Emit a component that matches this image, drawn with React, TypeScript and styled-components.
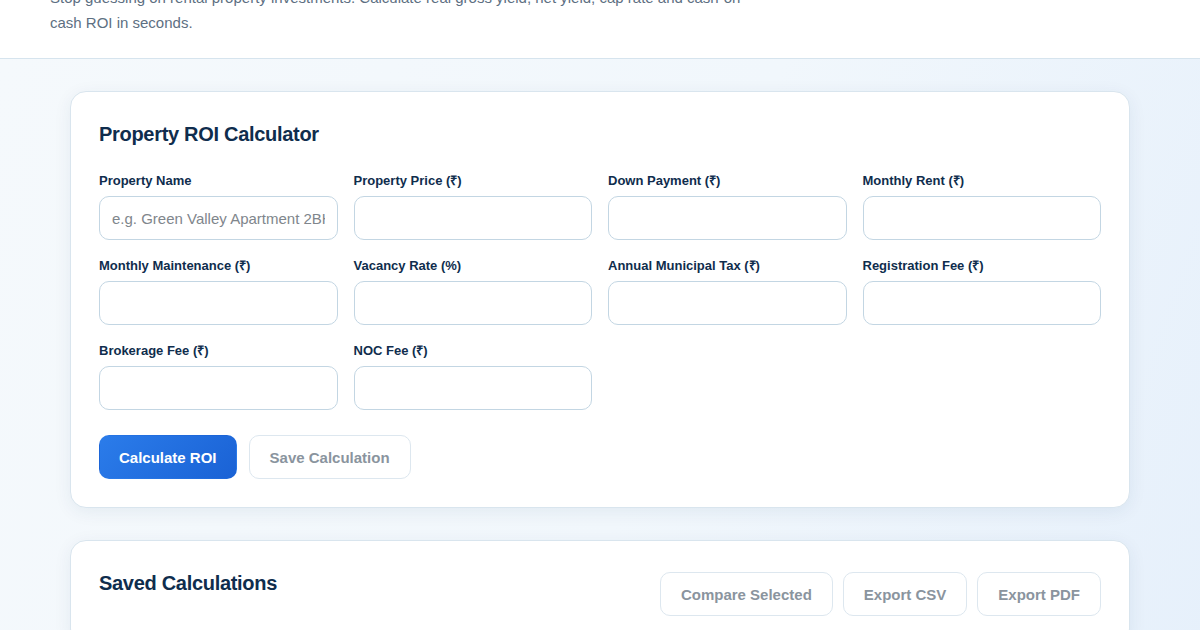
import React from 'react';
import styled, { createGlobalStyle } from 'styled-components';

const GlobalStyle = createGlobalStyle`
  * { box-sizing: border-box; }
  html, body {
    margin: 0;
    padding: 0;
    font-family: "Liberation Sans", Arial, sans-serif;
    background: #f4f8fb;
  }
`;

const Header = styled.header`
  background: #ffffff;
  border-bottom: 1px solid #d6e4ee;
  padding: 0 50px 23px;
`;

const Description = styled.p`
  margin: -15px 0 0;
  max-width: 720px;
  font-size: 15px;
  line-height: 25px;
  color: #5d6f82;
`;

const Main = styled.main`
  min-height: 600px;
  padding: 32px 70px;
  display: flex;
  flex-direction: column;
  gap: 32px;
  background: linear-gradient(110deg, #f5f9fc 0%, #f1f7fc 55%, #e6f0fb 100%);
`;

const Card = styled.section`
  background: #ffffff;
  border: 1px solid #d9e5ee;
  border-radius: 16px;
  padding: 28px;
  box-shadow: 0 4px 18px rgba(20, 60, 100, 0.07);
`;

const CardTitle = styled.h2`
  margin: 0;
  font-size: 20px;
  line-height: 28px;
  font-weight: 700;
  color: #0f2d4d;
  letter-spacing: -0.3px;
`;

const FormGrid = styled.div`
  margin-top: 25px;
  display: grid;
  grid-template-columns: repeat(4, 1fr);
  column-gap: 16px;
  row-gap: 18px;
`;

const Field = styled.label`
  display: flex;
  flex-direction: column;
  gap: 7px;
`;

const LabelText = styled.span`
  font-size: 13px;
  line-height: 16px;
  font-weight: 700;
  color: #0f2d4d;
`;

const Input = styled.input`
  height: 44px;
  width: 100%;
  border: 1px solid #c3d6e3;
  border-radius: 10px;
  padding: 0 12px;
  font-family: inherit;
  font-size: 15px;
  color: #1f2f40;
  background: #ffffff;
  outline: none;

  &::placeholder {
    color: #80868c;
  }
`;

const Actions = styled.div`
  margin-top: 25px;
  display: flex;
  gap: 12px;
`;

const Button = styled.button<{ $primary?: boolean }>`
  height: 44px;
  padding: 0 ${(p) => (p.$primary ? '19px' : '20px')};
  border-radius: 10px;
  font-family: inherit;
  font-size: 15px;
  font-weight: 700;
  cursor: pointer;
  border: 1px solid ${(p) => (p.$primary ? 'transparent' : '#dde7ef')};
  background: ${(p) => (p.$primary ? 'linear-gradient(135deg, #2b7cea 0%, #1a62d5 100%)' : '#ffffff')};
  color: ${(p) => (p.$primary ? '#ffffff' : '#8a949e')};
`;

const SavedHeader = styled.div`
  display: flex;
  justify-content: space-between;
  align-items: flex-start;
`;

const ButtonGroup = styled.div`
  display: flex;
  gap: 10px;
  padding-top: 3px;
`;

const fields = [
  { label: 'Property Name', placeholder: 'e.g. Green Valley Apartment 2BHK', type: 'text' },
  { label: 'Property Price (₹)', type: 'number' },
  { label: 'Down Payment (₹)', type: 'number' },
  { label: 'Monthly Rent (₹)', type: 'number' },
  { label: 'Monthly Maintenance (₹)', type: 'number' },
  { label: 'Vacancy Rate (%)', type: 'number' },
  { label: 'Annual Municipal Tax (₹)', type: 'number' },
  { label: 'Registration Fee (₹)', type: 'number' },
  { label: 'Brokerage Fee (₹)', type: 'number' },
  { label: 'NOC Fee (₹)', type: 'number' },
];

export default function App() {
  return (
    <>
      <GlobalStyle />
      <Header>
        <Description>
          Stop guessing on rental property investments. Calculate real gross yield, net yield, cap rate and cash-on-cash ROI in seconds.
        </Description>
      </Header>
      <Main>
        <Card>
          <CardTitle>Property ROI Calculator</CardTitle>
          <FormGrid>
            {fields.map((f) => (
              <Field key={f.label}>
                <LabelText>{f.label}</LabelText>
                <Input type={f.type} placeholder={f.placeholder} />
              </Field>
            ))}
          </FormGrid>
          <Actions>
            <Button $primary>Calculate ROI</Button>
            <Button>Save Calculation</Button>
          </Actions>
        </Card>
        <Card>
          <SavedHeader>
            <CardTitle>Saved Calculations</CardTitle>
            <ButtonGroup>
              <Button>Compare Selected</Button>
              <Button>Export CSV</Button>
              <Button>Export PDF</Button>
            </ButtonGroup>
          </SavedHeader>
        </Card>
      </Main>
    </>
  );
}
